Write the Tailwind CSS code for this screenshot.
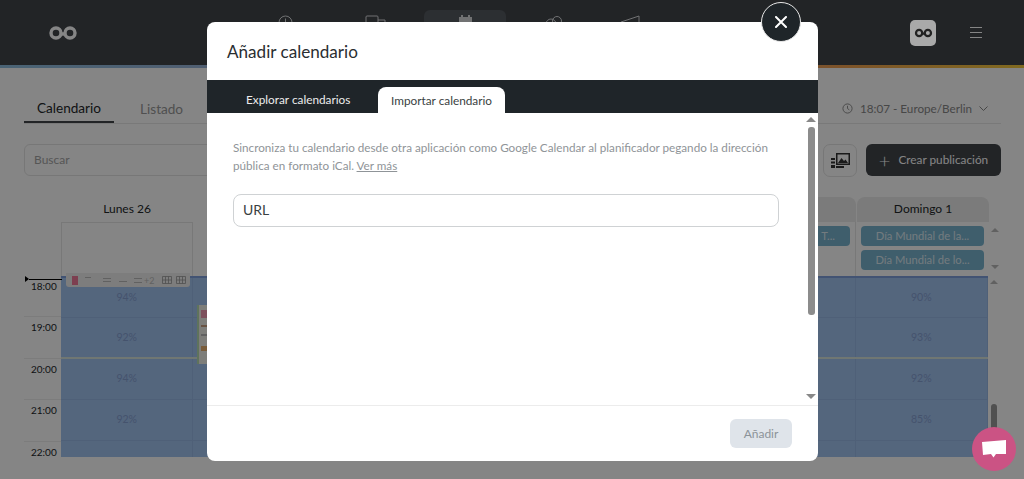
<!DOCTYPE html>
<html><head><meta charset="utf-8"><script src="https://cdn.jsdelivr.net/npm/@tailwindcss/browser@4"></script></head>
<body class="m-0 overflow-hidden bg-white">
<div class="relative w-[1024px] h-[479px] overflow-hidden bg-white font-['Lato',sans-serif] text-[#23272a]">

  <!-- top bar -->
  <header class="relative flex items-center h-[65px] bg-[#41454a] pr-[42px]">
    <svg class="ml-[48px] w-[30px] h-[16px]" viewBox="0 0 30 16" fill="none" stroke="#fff" stroke-width="3.4"><circle cx="8" cy="8" r="5"/><circle cx="22" cy="8" r="5"/><path d="M12 9h6"/></svg>
    <nav class="absolute left-[278px] top-[10px] flex items-start text-[#d8dadc]">
      <svg class="w-[15px] h-[15px] mt-[5px]" viewBox="0 0 15 15" fill="none" stroke="currentColor" stroke-width="1"><circle cx="7.500" cy="7.500" r="6.500"/><path d="M7.500 3.500v4h3"/></svg>
      <svg class="w-[22px] h-[15px] ml-[72px] mt-[5px]" viewBox="0 0 22 15" fill="none" stroke="currentColor" stroke-width="1"><rect x="1" y="1" width="12" height="13" rx="1"/><path d="M13 5h7v9"/></svg>
      <div class="w-[82px] h-[40px] ml-[37px] rounded-[6px] bg-[#555a60] flex justify-center pt-[5px]">
        <svg class="w-[15px] h-[15px]" viewBox="0 0 15 15" fill="currentColor"><path d="M3 0h2v2h5V0h2v2h2v13H1V2h2Z"/></svg>
      </div>
      <svg class="w-[20px] h-[15px] ml-[38px] mt-[5px]" viewBox="0 0 20 15" fill="none" stroke="currentColor" stroke-width="1"><circle cx="7" cy="9" r="5"/><circle cx="13" cy="6" r="4.500"/></svg>
      <svg class="w-[20px] h-[15px] ml-[56px] mt-[5px]" viewBox="0 0 20 15" fill="none" stroke="currentColor" stroke-width="1"><path d="M1 7l18-6v13H1Z"/></svg>
    </nav>
    <div class="relative z-10 ml-auto w-[26px] h-[26px] rounded-[5px] bg-[#a9a9a9] flex items-center justify-center">
      <svg class="w-[19px] h-[10px]" viewBox="0 0 30 16" fill="none" stroke="#222" stroke-width="3.600"><circle cx="8" cy="8" r="5"/><circle cx="22" cy="8" r="5"/><path d="M12 9h6"/></svg>
    </div>
    <div class="ml-[34px] w-[12px] flex flex-col gap-[3.500px]"><i class="block h-[1.500px] bg-white"></i><i class="block h-[1.500px] bg-white"></i><i class="block h-[1.500px] bg-white"></i></div>
  </header>
  <div class="h-[3px] bg-[linear-gradient(90deg,#8fbfe0_0%,#a9a8d0_50%,#ef9f50_82%,#f6cb3e_100%)]"></div>

  <!-- page -->
  <main class="pl-[24px] relative">
    <div class="flex items-center h-[56px] mr-[23px] border-b border-[#e8e8e8]">
      <div class="h-full w-[90px] flex items-center justify-center border-b-2 border-[#41454a] pt-[27px]"><span class="text-[13.600px]">Calendario</span></div>
      <span class="ml-[26px] pt-[27px] text-[13.600px] text-[#999]">Listado</span>
      <div class="ml-auto pr-[13px] pt-[27px] flex items-center gap-[7px] text-[11.700px] text-[#888]">
        <svg class="w-[11px] h-[11px]" viewBox="0 0 12 12" fill="none" stroke="currentColor" stroke-width="1"><circle cx="6" cy="6" r="5"/><path d="M6 3v3l2 1.500"/></svg>
        <span>18:07 - Europe/Berlin</span>
        <svg class="w-[9px] h-[5px]" viewBox="0 0 9 5" fill="none" stroke="currentColor"><path d="M.5.5l4 4 4-4"/></svg>
      </div>
    </div>

    <div class="flex mt-[20px] h-[32px] pr-[23px]">
      <div class="w-[400px] h-full rounded-[6px] border border-[#e4e4e4] flex items-center pl-[9px] text-[12px] text-[#a5a5a5]">Buscar</div>
      <div class="ml-auto w-[34px] h-[33px] rounded-[7px] border border-[#e4e4e4] flex items-center justify-center">
        <svg class="w-[19px] h-[16px]" viewBox="0 0 19 16" fill="#333"><path d="M5 0h14v12H5Zm1.500 1.500v9h11v-9Z"/><path d="M7 10l3.500-5 2.500 3 1.500-1.500L17 10Z"/><path d="M0 5h4v2H0Zm0 3.500h4v2H0ZM0 12h4v3H0Zm5 1h8v2H5Z"/></svg>
      </div>
      <div class="ml-[9px] w-[135px] h-full rounded-[6px] bg-[#41454a] text-white text-[11.800px] flex items-center justify-center gap-[8px]"><span class="text-[20px] font-light leading-none">+</span>Crear publicación</div>
    </div>

    <!-- day heads -->
    <div class="flex mt-[21px] h-[25px] text-[12px]">
      <div class="w-[37px] shrink-0"></div>
      <div class="w-[132px] shrink-0 pb-[2px] flex items-center justify-center">Lunes 26</div>
      <div class="w-[531px] shrink-0"></div>
      <div class="w-[132px] shrink-0 rounded-t-[8px] bg-[#ebebeb]"></div>
      <div class="w-[132px] shrink-0 ml-[1px] pb-[2px] rounded-t-[8px] bg-[#ebebeb] flex items-center justify-center">Domingo 1</div>
    </div>

    <!-- all-day row -->
    <div class="flex h-[54px]">
      <div class="w-[37px] shrink-0"></div>
      <div class="w-[132px] shrink-0 h-[54px] border-x border-t border-[#e6e6e6]"></div>
      <div class="w-[531px] shrink-0"></div>
      <div class="w-[132px] shrink-0 pl-[4px] pr-[5px] pt-[4px] border-r border-[#e6e6e6]"><div class="h-[20px] rounded-[4px] bg-[#7ab5d0] flex items-center justify-end pr-[15px] text-[11.200px] text-white/75">T...</div></div>
      <div class="w-[132px] shrink-0 ml-[1px] pl-[4px] pr-[5px] pt-[4px] flex flex-col gap-[4px] text-[11.200px] text-white/75">
        <div class="h-[20px] rounded-[4px] bg-[#7ab5d0] flex items-center justify-center">Día Mundial de la...</div>
        <div class="h-[20px] rounded-[4px] bg-[#7ab5d0] flex items-center justify-center">Día Mundial de lo...</div>
      </div>
      <div class="relative w-[14px]">
        <svg class="absolute left-[2px] top-[6px] w-[8px] h-[4px]" viewBox="0 0 10 5" fill="#bbb"><path d="M5 0l5 5H0Z"/></svg>
        <svg class="absolute left-[2px] top-[43px] w-[8px] h-[4px]" viewBox="0 0 10 5" fill="#bbb"><path d="M0 0h10L5 5Z"/></svg>
      </div>
    </div>

    <!-- time grid -->
    <div class="flex h-[181px]">
      <div class="w-[37px] shrink-0 text-[10px] leading-[15px] text-[#23272a]">
        <div class="h-[41.400px] border-b border-[#eee] pl-[7px] pt-[3px]">18:00</div>
        <div class="h-[41.400px] border-b border-[#eee] pl-[7px] pt-[3px]">19:00</div>
        <div class="h-[41.400px] border-b border-[#eee] pl-[7px] pt-[3px]">20:00</div>
        <div class="h-[41.400px] border-b border-[#eee] pl-[7px] pt-[3px]">21:00</div>
        <div class="h-[15px] pl-[7px] pt-[3px]">22:00</div>
      </div>
      <div class="relative w-[927px] shrink-0 bg-[#a2c3f0] border-t-2 border-[#7f9fdc] text-[10.500px] text-[#84a0d2]">
        <div class="grid grid-cols-7 h-[40px] border-b border-[#98b8e6] *:border-r *:border-[#98b8e6] *:flex *:items-center *:justify-center"><div>94%</div><div></div><div></div><div></div><div></div><div></div><div>90%</div></div>
        <div class="grid grid-cols-7 h-[41px] border-b-2 border-[#d6e5dc] *:border-r *:border-[#98b8e6] *:flex *:items-center *:justify-center"><div>92%</div><div></div><div></div><div></div><div></div><div></div><div>93%</div></div>
        <div class="grid grid-cols-7 h-[41px] border-b border-[#98b8e6] *:border-r *:border-[#98b8e6] *:flex *:items-center *:justify-center"><div>94%</div><div></div><div></div><div></div><div></div><div></div><div>92%</div></div>
        <div class="grid grid-cols-7 h-[41px] border-b border-[#98b8e6] *:border-r *:border-[#98b8e6] *:flex *:items-center *:justify-center"><div>92%</div><div></div><div></div><div></div><div></div><div></div><div>85%</div></div>
        <div class="grid grid-cols-7 h-[16px] *:border-r *:border-[#98b8e6]"><div></div><div></div><div></div><div></div><div></div><div></div><div></div></div>

        <!-- hover toolbar over the first cell -->
        <div class="absolute left-[5px] top-[-5px] w-[124px] h-[14px] rounded-b-[3px] bg-[#f0f0f0] flex items-center pl-[6px] text-[#bbb]">
          <i class="block w-[6px] h-[9px] bg-[#f07a9a]"></i>
          <i class="block ml-[7px] w-[6px] h-[7px] border-t border-current"></i>
          <i class="block ml-[12px] w-[8px] h-[4px] border-y border-current"></i>
          <i class="block ml-[8px] w-[8px] h-[4px] border-b border-current"></i>
          <i class="block ml-[7px] w-[8px] h-[5px] border-y border-current"></i>
          <span class="ml-[2px] text-[9px] leading-none">+2</span>
          <svg class="ml-[8px] w-[10px] h-[8px]" viewBox="0 0 10 8" fill="none" stroke="#999" stroke-width=".8"><path d="M.5.5h9v7h-9ZM3.500.5v7M6.500.5v7M.5 4h9"/></svg>
          <svg class="ml-[4px] w-[10px] h-[8px]" viewBox="0 0 10 8" fill="none" stroke="#999" stroke-width=".8"><path d="M.5.5h9v7h-9ZM3.500.5v7M6.500.5v7M.5 4h9"/></svg>
        </div>
        <!-- post card -->
        <div class="absolute left-[136px] top-[27px] w-[30px] h-[59px] bg-[#f2f2ea] border-l-2 border-[#b6dcb0]">
          <i class="block ml-[2px] mt-[5px] w-[6px] h-[8px] bg-[#f09ab0]"></i>
          <i class="block ml-[2px] mt-[7px] w-[6px] h-[2px] bg-[#c9a080]"></i>
          <i class="block ml-[2px] mt-[7px] w-[6px] h-[2px] bg-[#bbb]"></i>
          <i class="block ml-[2px] mt-[10px] w-[6px] h-[5px] bg-[#e8b070]"></i>
        </div>
      </div>
      <div class="relative w-[14px]">
        <svg class="absolute left-[2px] top-[4px] w-[8px] h-[4px]" viewBox="0 0 10 5" fill="#bbb"><path d="M5 0l5 5H0Z"/></svg>
        <i class="absolute left-[3px] top-[128px] w-[6px] h-[53px] rounded-[3px] bg-[#999]"></i>
      </div>
    </div>
    <!-- now marker -->
    <div class="absolute left-[25px] top-[208px] flex items-center">
      <svg class="w-[4px] h-[6px]" viewBox="0 0 4 6" fill="#000"><path d="M0 0l4 3-4 3Z"/></svg>
      <i class="block w-[33px] h-[1px] bg-black"></i>
    </div>
  </main>

  <!-- scrim -->
  <div class="absolute inset-0 bg-black/[.48]"></div>

  <!-- chat bubble -->
  <div class="absolute left-[972px] top-[427px] z-10 w-[44px] h-[44px] rounded-full bg-[#cb5384] flex items-center justify-center">
    <svg class="w-[24px] h-[20px]" viewBox="0 0 24 20" fill="#fff"><path d="M0 3l24-2v14l-10 0-2.500 3.500L9 15l-8 1Z"/></svg>
  </div>

  <!-- modal -->
  <section class="absolute left-[207px] top-[22px] w-[611px] h-[439px] bg-white rounded-[8px] flex flex-col">
    <div class="h-[58px] flex items-center pl-[20px] pt-[1px] text-[17.100px] text-[#2a2e31]">Añadir calendario</div>
    <div class="h-[33px] bg-[#1f2529] flex items-end pl-[26px] text-[11.800px]">
      <div class="h-[26px] w-[132px] px-[13px] flex items-center whitespace-nowrap text-[#ececec]">Explorar calendarios</div>
      <div class="h-[26px] ml-[13px] w-[127px] pt-[1px] flex items-center justify-center bg-white text-[#3a3f42] rounded-t-[8px]">Importar calendario</div>
    </div>
    <div class="flex-1 relative pl-[26px] pr-[38px] pt-[25px]">
      <p class="text-[11.700px] leading-[18px] text-[#8f9498]">Sincroniza tu calendario desde otra aplicación como Google Calendar al planificador pegando la dirección pública en formato iCal. <span class="underline">Ver más</span></p>
      <div class="mt-[20px] w-[546px] h-[33px] rounded-[8px] border border-[#cfd2d4] flex items-center pl-[9px] pb-[2px] text-[14px] text-[#3a3f42]">URL</div>
      <svg class="absolute right-[2px] top-[4px] w-[10px] h-[5px]" viewBox="0 0 10 5" fill="#888"><path d="M5 0l5 5H0Z"/></svg>
      <i class="absolute right-[3px] top-[14px] w-[7px] h-[188px] rounded-[3px] bg-[#8c8c8c]"></i>
      <svg class="absolute right-[2px] bottom-[6px] w-[10px] h-[5px]" viewBox="0 0 10 5" fill="#888"><path d="M0 0h10L5 5Z"/></svg>
    </div>
    <div class="h-[56px] border-t border-[#ececec] flex items-center justify-end pr-[26px]">
      <div class="w-[62px] h-[29px] rounded-[6px] bg-[#dfe4ea] text-[#8c9399] text-[12px] flex items-center justify-center">Añadir</div>
    </div>
    <button class="absolute left-[554px] top-[-20px] w-[40px] h-[40px] rounded-full bg-[#1f2529] border border-[#e8e8e8] flex items-center justify-center">
      <svg class="w-[12px] h-[12px]" viewBox="0 0 12 12" stroke="#fff" stroke-width="2" stroke-linecap="round"><path d="M1 1l10 10M11 1L1 11"/></svg>
    </button>
  </section>
</div>
</body></html>
